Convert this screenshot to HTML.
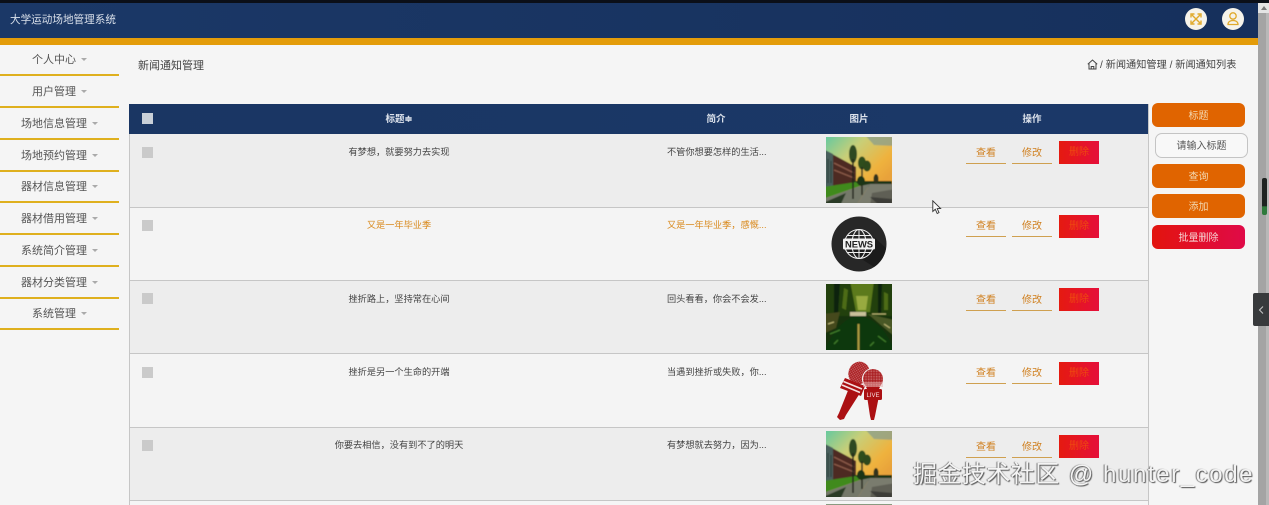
<!DOCTYPE html>
<html lang="zh">
<head>
<meta charset="utf-8">
<style>
html,body{margin:0;padding:0;width:1269px;height:505px;overflow:hidden;background:#f5f5f5;}
body{position:relative;font-family:"Liberation Sans","Noto Sans CJK SC",sans-serif;font-size:9.2px;color:#444;}
.a{position:absolute;}
.t{position:absolute;white-space:nowrap;line-height:14px;}
.c{transform:translateX(-50%);}
.side{position:absolute;left:0;width:119px;height:32px;border-bottom:2px solid #dfb01e;box-sizing:border-box;text-align:center;line-height:33px;font-size:11px;color:#555;}
.side i{display:inline-block;width:0;height:0;border:3.5px solid transparent;border-top:3.5px solid #aaa;border-bottom:0;margin-left:5px;vertical-align:2px;}
.row{position:absolute;left:130px;width:1018px;border-bottom:1px solid #c6c6c6;box-sizing:border-box;}
.cb{position:absolute;left:142px;width:11px;height:11px;background:#cacaca;}
.btn{position:absolute;width:40px;height:22px;text-align:center;line-height:23px;font-size:10px;color:#d08020;border-bottom:1px solid #cfa050;box-sizing:border-box;}
.del{position:absolute;left:1059px;width:40px;height:23px;background:linear-gradient(90deg,#e51a10,#e50f3a);color:#ee4a10;text-align:center;line-height:24px;font-size:10px;}
.act{position:absolute;left:1152px;width:93px;height:24px;border-radius:6px;background:#e06400;color:#f3d8b0;text-align:center;line-height:27px;font-size:10px;}
.img{position:absolute;left:826px;width:66px;height:66px;}
</style>
</head>
<body>
<!-- top bar -->
<div class="a" style="left:0;top:0;width:1269px;height:3px;background:#0b0f18"></div>
<div class="a" style="left:0;top:3px;width:1258px;height:35px;background:linear-gradient(90deg,#1b3867,#16305c)"></div>
<div class="a" style="left:0;top:38px;width:1258px;height:7px;background:#e39c0a"></div>
<div class="t" style="left:10px;top:13px;font-size:10.6px;color:#d9e0ea">大学运动场地管理系统</div>
<div class="a" style="left:1185px;top:8px;width:22px;height:22px;border-radius:50%;background:#f6f3ea"></div>
<svg class="a" style="left:1185px;top:8px" width="22" height="22" viewBox="0 0 22 22" fill="none" stroke="#e0a92a" stroke-width="1.4"><path d="M7 7L15 15M15 7L7 15M6 9.5V6H9.5M12.5 6H16V9.5M6 12.5V16H9.5M12.5 16H16V12.5"/></svg>
<div class="a" style="left:1222px;top:8px;width:22px;height:22px;border-radius:50%;background:#f6f3ea"></div>
<svg class="a" style="left:1222px;top:8px" width="22" height="22" viewBox="0 0 22 22" fill="none" stroke="#e0a92a" stroke-width="1.3"><circle cx="11" cy="8" r="3.2"/><path d="M6 16.5C6 13.5 8.5 12.5 11 12.5S16 13.5 16 16.5Z"/></svg>

<!-- sidebar -->
<div class="a" style="left:129px;top:104px;width:1px;height:401px;background:#c6c6c6"></div>
<div class="side" style="top:44px">个人中心<i></i></div>
<div class="side" style="top:76px">用户管理<i></i></div>
<div class="side" style="top:108px">场地信息管理<i></i></div>
<div class="side" style="top:140px">场地预约管理<i></i></div>
<div class="side" style="top:171px">器材信息管理<i></i></div>
<div class="side" style="top:203px">器材借用管理<i></i></div>
<div class="side" style="top:235px">系统简介管理<i></i></div>
<div class="side" style="top:267px">器材分类管理<i></i></div>
<div class="side" style="top:298px">系统管理<i></i></div>

<!-- heading -->
<div class="t" style="left:138px;top:59px;font-size:11px;color:#444">新闻通知管理</div>
<svg class="a" style="left:1087px;top:59px" width="11" height="11" viewBox="0 0 11 11" fill="none" stroke="#444" stroke-width="1"><path d="M.8 5.2L5.5 1L10.2 5.2M2 4.5V10H9V4.5M4.2 10V7.5H6.8V10"/></svg>
<div class="t" style="left:1100px;top:58px;font-size:10.2px;line-height:15px;color:#444">/ 新闻通知管理 / 新闻通知列表</div>

<!-- table header -->
<div class="a" style="left:129px;top:104px;width:1019px;height:29.5px;background:linear-gradient(90deg,#1a3663,#1b3868);"></div>
<div class="a" style="left:142px;top:113px;width:11px;height:11px;background:#c9d0d8"></div>
<div class="t c" style="left:399px;top:112px;font-size:9.5px;line-height:15px;font-weight:bold;color:#dde3ec">标题≑</div>
<div class="t c" style="left:716px;top:112px;font-size:9.5px;line-height:15px;font-weight:bold;color:#dde3ec">简介</div>
<div class="t c" style="left:859px;top:112px;font-size:9.5px;line-height:15px;font-weight:bold;color:#dde3ec">图片</div>
<div class="t c" style="left:1032px;top:112px;font-size:9.5px;line-height:15px;font-weight:bold;color:#dde3ec">操作</div>

<!-- rows -->
<div class="row" style="top:134px;height:74px;background:#ededed"></div>
<div class="row" style="top:208px;height:73px;background:#f4f4f4"></div>
<div class="row" style="top:281px;height:73px;background:#ededed"></div>
<div class="row" style="top:354px;height:74px;background:#f4f4f4"></div>
<div class="row" style="top:428px;height:73px;background:#ededed"></div>
<div class="a" style="left:1148px;top:104px;width:1px;height:401px;background:#c6c6c6"></div>

<div class="cb" style="top:147px"></div>
<div class="cb" style="top:220px"></div>
<div class="cb" style="top:293px"></div>
<div class="cb" style="top:367px"></div>
<div class="cb" style="top:440px"></div>

<div class="t c" style="left:399px;top:145px;line-height:15px;color:#444">有梦想，就要努力去实现</div>
<div class="t c" style="left:399px;top:218px;line-height:15px;color:#d98a1e">又是一年毕业季</div>
<div class="t c" style="left:399px;top:292px;line-height:15px;color:#444">挫折路上，坚持常在心间</div>
<div class="t c" style="left:399px;top:365px;line-height:15px;color:#444">挫折是另一个生命的开端</div>
<div class="t c" style="left:399px;top:438px;line-height:15px;color:#444">你要去相信，没有到不了的明天</div>

<div class="t" style="left:667px;top:145px;line-height:15px;color:#444">不管你想要怎样的生活...</div>
<div class="t" style="left:667px;top:218px;line-height:15px;color:#d98a1e">又是一年毕业季，感慨...</div>
<div class="t" style="left:667px;top:292px;line-height:15px;color:#444">回头看看，你会不会发...</div>
<div class="t" style="left:667px;top:365px;line-height:15px;color:#444">当遇到挫折或失败，你...</div>
<div class="t" style="left:667px;top:438px;line-height:15px;color:#444">有梦想就去努力，因为...</div>

<!-- images -->
<svg width="0" height="0" style="position:absolute"><defs>
<linearGradient id="sky" x1="0" y1="0" x2=".75" y2=".75"><stop offset="0" stop-color="#58c8a4"/><stop offset=".42" stop-color="#c8cf78"/><stop offset=".8" stop-color="#efb23e"/><stop offset="1" stop-color="#e8a23a"/></linearGradient>
<filter id="bl" x="-5%" y="-5%" width="110%" height="110%"><feGaussianBlur stdDeviation=".6"/></filter>
<clipPath id="cp"><rect width="66" height="66"/></clipPath>
<symbol id="campus" viewBox="0 0 66 66">
<g clip-path="url(#cp)"><g filter="url(#bl)">
<rect x="-3" y="-3" width="72" height="72" fill="url(#sky)"/>
<path d="M38 -3H70V9L48 8Z" fill="#8a9d8c" opacity=".75"/>
<path d="M6 17L30 30V47L6 50Z" fill="#4e2a22"/>
<path d="M8 26L28 36M8 33L28 41" stroke="#8a5a48" stroke-width="1.4"/>
<path d="M-3 12L7 17V51H-3Z" fill="#485e5c"/>
<path d="M2 22V46M5 24V46" stroke="#263836" stroke-width="1"/>
<path d="M24 44H66V50H40Z" fill="#1f3618"/>
<path d="M-3 50L30 45L34 49L-3 62Z" fill="#3f8a1c"/>
<path d="M-3 62L34 49L44 47L30 69H-3Z" fill="#74796a"/>
<path d="M-3 66L20 56L14 69H-3Z" fill="#2c3a26"/>
<path d="M30 69L44 47H70V69Z" fill="#7a7c6e"/>
<path d="M46 56L70 52V69H44Z" fill="#5e5e54"/>
<path d="M44 60L54 69H66V62Z" fill="#3c3c38"/>
<ellipse cx="27" cy="17" rx="4" ry="9" fill="#2e4a20"/>
<path d="M27 22V62" stroke="#24241c" stroke-width="1.5"/>
<ellipse cx="36" cy="26" rx="4" ry="6.5" fill="#2f4e1e"/>
<ellipse cx="41" cy="29" rx="4" ry="5.5" fill="#2f4a1c"/>
<path d="M36 30V58" stroke="#28281a" stroke-width="1.5"/>
<ellipse cx="35" cy="44" rx="4" ry="5" fill="#1e3618"/>
<ellipse cx="50" cy="42" rx="2.5" ry="5" fill="#32321e"/>
</g></g>
</symbol>
<symbol id="road" viewBox="0 0 66 66">
<g clip-path="url(#cp)"><g filter="url(#bl)">
<rect x="-3" y="-3" width="72" height="72" fill="#16320a"/>
<path d="M-3 -3H70V32H-3Z" fill="#223f0c"/>
<path d="M24 -3H48L44 28H30Z" fill="#5c7a1a"/>
<path d="M30 12H42L40 26H32Z" fill="#98aa40"/>
<path d="M8 -3H14L12 30H8ZM52 -3H56L55 30H52Z" fill="#0c2208"/>
<path d="M18 4L22 6L20 26L16 24ZM58 8L62 10V26H58Z" fill="#4e6c16"/>
<path d="M-3 30L14 28L10 44L-3 50Z" fill="#44481f"/>
<rect x="24" y="28" width="16" height="4" fill="#c8c09a"/>
<path d="M42 30L68 36V52L56 42Z" fill="#485826"/>
<path d="M46 30H60M2 40L8 38M58 40L64 44" stroke="#b8b070" stroke-width="1.2"/>
<path d="M32 32C16 34 6 50 -3 69H69C62 48 50 34 32 32Z" fill="#0e380d"/>
<path d="M4 50L14 46M8 60L12 56M52 52L60 58M44 62L48 58" stroke="#3e7a2a" stroke-width="1.4"/>
<path d="M32.5 40V69" stroke="#a89a40" stroke-width="2"/>
</g></g>
</symbol>
</defs></svg>
<svg class="img" style="top:137px"><use href="#campus" width="66" height="66"/></svg>
<svg class="img" style="top:284px"><use href="#road" width="66" height="66"/></svg>
<svg class="img" style="top:431px"><use href="#campus" width="66" height="66"/></svg>

<svg class="img" style="top:211px" viewBox="0 0 66 66">
<circle cx="33" cy="33" r="27.5" fill="#272727"/>
<path d="M20 38L48 56A27.5 27.5 0 0 0 60 37L48 26Z" fill="#1b1b1b"/>
<g fill="none" stroke="#f2f2f2" stroke-width="1"><circle cx="33" cy="33" r="14.5"/><ellipse cx="33" cy="33" rx="7" ry="14.5"/><path d="M33 18.5V47.5M21 24.5H45M21 41.5H45M19 28H47M19 38H47"/></g>
<rect x="17" y="27.5" width="32" height="11" rx="1.5" fill="#f2f2f2"/>
<text x="33" y="36.6" text-anchor="middle" font-family="Liberation Sans" font-weight="bold" font-size="9.4" fill="#222">NEWS</text>
</svg>

<svg class="img" style="top:358px" viewBox="0 0 66 66">
<defs><pattern id="mesh" width="1.6" height="1.6" patternUnits="userSpaceOnUse"><rect width="1.6" height="1.6" fill="#a81a1e"/><circle cx=".8" cy=".8" r=".5" fill="#d07a7a"/></pattern></defs>
<g fill="#ab1013">
<path d="M23 30L34 35L20 57L18 61L14 62L11 59L13 55Z"/>
<ellipse cx="33" cy="15" rx="10.5" ry="11.5" transform="rotate(25 33 15)" fill="url(#mesh)"/>
<path d="M41 38H53L49 58L48 62H45L44 58Z"/>
<path d="M19 20L39 28L35 38L14 30Z"/>
</g>
<path d="M17.5 23.5L36 31M16 27L34 34.500" stroke="#f4e0e0" stroke-width="1.6"/>
<circle cx="47" cy="21" r="11" fill="#f4f4f4"/>
<circle cx="47" cy="21" r="10" fill="url(#mesh)"/>
<path d="M37 24H57V29H37Z" fill="#e8b0b0" opacity=".5"/>
<path d="M40 29H54L52 33H42Z" fill="#ab1013"/>
<rect x="38" y="31" width="18" height="11" rx="1.500" fill="#ab1013"/>
<text x="47" y="39" text-anchor="middle" font-family="Liberation Sans" font-size="6" fill="#f5dede">LIVE</text>
</svg>

<!-- actions in rows -->
<div class="btn" style="left:966px;top:142px">查看</div><div class="btn" style="left:1012px;top:142px">修改</div><div class="del" style="top:141px">删除</div>
<div class="btn" style="left:966px;top:215px">查看</div><div class="btn" style="left:1012px;top:215px">修改</div><div class="del" style="top:215px">删除</div>
<div class="btn" style="left:966px;top:289px">查看</div><div class="btn" style="left:1012px;top:289px">修改</div><div class="del" style="top:288px">删除</div>
<div class="btn" style="left:966px;top:362px">查看</div><div class="btn" style="left:1012px;top:362px">修改</div><div class="del" style="top:362px">删除</div>
<div class="btn" style="left:966px;top:436px">查看</div><div class="btn" style="left:1012px;top:436px">修改</div><div class="del" style="top:435px">删除</div>

<div class="img" style="top:504px;height:1px;background:#8a9a80"></div>

<!-- right panel -->
<div class="act" style="top:103px">标题</div>
<div class="a" style="left:1155px;top:133px;width:93px;height:25px;box-sizing:border-box;border:1px solid #c4c4c4;border-radius:7px;background:#f8f8f8;text-align:center;line-height:26px;font-size:10px;color:#555">请输入标题</div>
<div class="act" style="top:164px">查询</div>
<div class="act" style="top:194px">添加</div>
<div class="act" style="top:225px;background:linear-gradient(90deg,#e2140e,#e00a48);color:#f5d0d0">批量删除</div>

<!-- scrollbar -->
<div class="a" style="left:1258px;top:3px;width:11px;height:502px;background:#a4a4a4"></div>
<div class="a" style="left:1266px;top:3px;width:3px;height:502px;background:#b8b8b8"></div>
<div class="a" style="left:1258px;top:3px;width:11px;height:10px;background:#e4e4e4"></div>
<div class="a" style="left:1261px;top:6px;width:0;height:0;border:3px solid transparent;border-bottom:4px solid #777;border-top:0"></div>
<div class="a" style="left:1262px;top:178px;width:5px;height:37px;border-radius:2px;background:linear-gradient(180deg,#1d2220 0,#1d2220 75%,#2f7a3c 78%,#2f7a3c 100%)"></div>
<div class="a" style="left:1253px;top:293px;width:16px;height:33px;background:#383a3c;border-radius:2px 0 0 2px"></div>
<svg class="a" style="left:1253px;top:293px" width="16" height="33" fill="none" stroke="#c8c8c8" stroke-width="1"><path d="M10 13.5L6.5 17L10 20.5"/></svg>

<!-- watermark -->
<div class="t" style="left:913px;top:460px;font-size:24px;line-height:30px;color:#f4f4f4;letter-spacing:.45px;text-shadow:1px 1px 1px #555,-1px 0 1px #777">掘金技术社区 <span style="letter-spacing:1.6px;margin-left:2px">@ hunter_code</span></div>

<!-- cursor -->
<svg class="a" style="left:932px;top:200px" width="10" height="15" viewBox="0 0 10 15"><path d="M.8.8V11.5L3.3 9.3L5.2 13.5L7 12.6L5.2 8.6H8.6Z" fill="#fafafa" stroke="#333" stroke-width=".9"/></svg>
</body>
</html>
